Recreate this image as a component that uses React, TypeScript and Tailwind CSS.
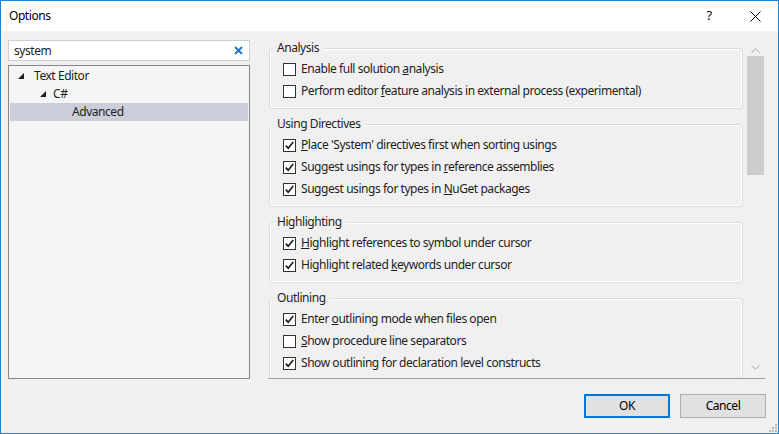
import type { ReactNode } from "react";

type Opt = { label: ReactNode; checked: boolean };

const groups: { title: string; options: Opt[] }[] = [
  {
    title: "Analysis",
    options: [
      { label: <>Enable full solution <u>a</u>nalysis</>, checked: false },
      {
        label: <>Perform editor <u>f</u>eature analysis in external process (experimental)</>,
        checked: false,
      },
    ],
  },
  {
    title: "Using Directives",
    options: [
      { label: <><u>P</u>lace 'System' directives first when sorting usings</>, checked: true },
      { label: <>Suggest usings for types in <u>r</u>eference assemblies</>, checked: true },
      { label: <>Suggest usings for types in <u>N</u>uGet packages</>, checked: true },
    ],
  },
  {
    title: "Highlighting",
    options: [
      { label: <><u>H</u>ighlight references to symbol under cursor</>, checked: true },
      { label: <>Highlight related <u>k</u>eywords under cursor</>, checked: true },
    ],
  },
  {
    title: "Outlining",
    options: [
      { label: <>Enter <u>o</u>utlining mode when files open</>, checked: true },
      { label: <><u>S</u>how procedure line separators</>, checked: false },
      { label: <>Show outlining for declaration level constructs</>, checked: true },
    ],
  },
];

const Checkbox = ({ checked }: { checked: boolean }) => {
  return (
    <span className="w-[13px] h-[13px] border border-[#333333] bg-white flex items-center justify-center shrink-0">
      {checked && (
        <svg width="11" height="11" viewBox="0 0 11 11">
          <path d="M1.8 5.6 L4.2 8.2 L9.2 2" fill="none" stroke="#1e1e1e" strokeWidth="1.7" />
        </svg>
      )}
    </span>
  );
};

const Group = ({ title, options }: { title: string; options: Opt[] }) => {
  return (
    <fieldset className="w-[474px] border border-[#dcdcdc] rounded-[3px] shadow-[inset_0_0_0_1px_#ffffff] pb-[6px] mb-[7px]">
      <legend className="ml-[3px] px-[4px] h-[16px] leading-[16px] bg-[#f0f0f0]">{title}</legend>
      <div className="pt-[2px] pl-[13px] flex flex-col">
        {options.map((o, i) => (
          <div key={i} className="h-[22px] flex items-center gap-[5px]">
            <Checkbox checked={o.checked} />
            <span className="whitespace-nowrap">{o.label}</span>
          </div>
        ))}
      </div>
    </fieldset>
  );
};

const Triangle = () => (
  <svg width="6" height="6" viewBox="0 0 6 6" className="shrink-0">
    <polygon points="6,0 6,6 0,6" fill="#1e1e1e" />
  </svg>
);

const Tree = () => {
  return (
    <div className="mt-[4px] h-[314px] border border-[#828790] bg-[#f5f5f5] pt-px">
      <div className="h-[18px] flex items-center pl-[9px] gap-[10px]">
        <Triangle />
        <span>Text Editor</span>
      </div>
      <div className="h-[18px] flex items-center pl-[31px] gap-[7px]">
        <Triangle />
        <span>C#</span>
      </div>
      <div className="h-[18px] flex items-center pl-[62px] mx-px bg-[#cccedb]">Advanced</div>
    </div>
  );
};

const Scrollbar = () => {
  return (
    <div className="w-[17px] flex flex-col ml-[4px]">
      <div className="h-[20px] flex items-end justify-center pb-[3px]">
        <svg width="9" height="5" viewBox="0 0 9 5">
          <path d="M0.5 4.5 L4.5 0.8 L8.5 4.5" fill="none" stroke="#a6a6a6" strokeWidth="1" />
        </svg>
      </div>
      <div className="h-[119px] bg-[#cdcdcd]" />
      <div className="flex-1" />
      <div className="h-[22px] flex items-center justify-center">
        <svg width="9" height="5" viewBox="0 0 9 5">
          <path d="M0.5 0.5 L4.5 4.2 L8.5 0.5" fill="none" stroke="#a6a6a6" strokeWidth="1" />
        </svg>
      </div>
    </div>
  );
};

export default function App() {
  return (
    <div
      className="relative w-[779px] h-[434px] border border-[#1883d7] bg-[#f0f0f0] flex flex-col text-[12px] tracking-[-0.45px] text-[#1e1e1e]"
      style={{ fontFamily: '"Noto Sans", "Open Sans", sans-serif' }}
    >
      <div className="h-[30px] bg-white flex items-center pl-[8px] shrink-0">
        <span className="flex-1 text-[12px] text-black">Options</span>
        <span className="w-[46px] text-center text-[13px] text-black">?</span>
        <span className="w-[46px] flex justify-center">
          <svg width="11" height="11" viewBox="0 0 11 11">
            <path d="M0.5 0.5 L10.5 10.5 M10.5 0.5 L0.5 10.5" stroke="#000" strokeWidth="1" />
          </svg>
        </span>
      </div>

      <div className="h-[348px] flex shrink-0">
        <div className="w-[249px] pl-[7px] pt-[9px] flex flex-col">
          <div className="h-[21px] border border-[#cccedb] bg-white flex items-center pl-[5px] pr-[6px]">
            <span className="flex-1">system</span>
            <svg width="9" height="9" viewBox="0 0 9 9">
              <path d="M1 1 L8 8 M8 1 L1 8" stroke="#1e72c8" strokeWidth="1.8" />
            </svg>
          </div>
          <Tree />
        </div>

        <div className="ml-[18px] mt-[5px] w-[497px] h-[343px] border-b border-[#a0a0a0] flex overflow-hidden">
          <div className="pl-px pt-[4px] flex flex-col">
            {groups.map((g) => (
              <Group key={g.title} title={g.title} options={g.options} />
            ))}
          </div>
          <Scrollbar />
        </div>
      </div>

      <div className="flex-1 flex justify-end items-start gap-[10px] pt-[15px] pr-[12px]">
        <button className="w-[86px] h-[24px] border-2 border-[#0078d7] bg-[#e1e1e1] text-black">OK</button>
        <button className="w-[86px] h-[24px] border border-[#adadad] bg-[#e1e1e1] text-black">Cancel</button>
      </div>

      <svg width="8" height="8" viewBox="0 0 8 8" className="absolute right-[1px] bottom-[1px]">
        <rect x="6" y="0" width="2" height="2" fill="#b8b8b8" />
        <rect x="3" y="3" width="2" height="2" fill="#b8b8b8" />
        <rect x="6" y="3" width="2" height="2" fill="#b8b8b8" />
        <rect x="0" y="6" width="2" height="2" fill="#b8b8b8" />
        <rect x="3" y="6" width="2" height="2" fill="#b8b8b8" />
        <rect x="6" y="6" width="2" height="2" fill="#b8b8b8" />
      </svg>
    </div>
  );
}
